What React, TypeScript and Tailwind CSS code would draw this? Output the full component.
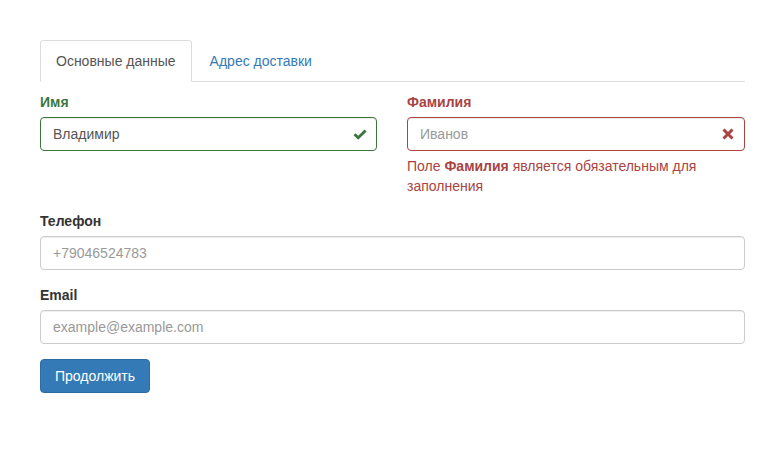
const font = { fontFamily: '"Liberation Sans", Arial, sans-serif' };

function CheckIcon() {
  return (
    <svg width="14" height="14" viewBox="0 0 14 14">
      <path d="M1.5 7.2 L5.2 10.8 L12.6 3.4" fill="none" stroke="#3c763d" strokeWidth="2.8" />
    </svg>
  );
}

function CrossIcon() {
  return (
    <svg width="14" height="14" viewBox="0 0 14 14">
      <path d="M2.5 2.5 L11.5 11.5 M11.5 2.5 L2.5 11.5" fill="none" stroke="#a94442" strokeWidth="3" />
    </svg>
  );
}

const inputBase =
  "block w-full h-[34px] px-3 text-[14px] rounded-[4px] border bg-white outline-none shadow-[inset_0_1px_1px_rgba(0,0,0,0.075)] placeholder:text-[#999]";

export default function App() {
  return (
    <div className="min-h-[461px] bg-white text-[14px] leading-[20px] text-[#333]" style={font}>
      <div className="w-[705px] ml-[40px] pt-[40px]">
        <ul className="flex border-b border-[#ddd]">
          <li className="-mb-px mr-[2px]">
            <span className="block px-[15px] py-[10px] bg-white text-[#555] border border-[#ddd] border-b-transparent rounded-t-[4px]">
              Основные данные
            </span>
          </li>
          <li className="-mb-px mr-[2px]">
            <span className="block px-[15px] py-[10px] text-[#337ab7] border border-transparent">
              Адрес доставки
            </span>
          </li>
        </ul>

        <div className="grid grid-cols-[337px_338px] gap-x-[30px] mt-[10px]">
          <div className="mb-[15px]">
            <label className="block mb-[5px] font-bold text-[#3c763d]">Имя</label>
            <div className="relative">
              <input
                className={`${inputBase} border-[#3c763d] text-[#555] pr-[34px]`}
                defaultValue="Владимир"
              />
              <span className="absolute right-0 top-0 w-[34px] h-[34px] flex items-center justify-center">
                <CheckIcon />
              </span>
            </div>
          </div>

          <div className="mb-[15px]">
            <label className="block mb-[5px] font-bold text-[#a94442]">Фамилия</label>
            <div className="relative">
              <input
                className={`${inputBase} border-[#a94442] text-[#555] pr-[34px]`}
                placeholder="Иванов"
              />
              <span className="absolute right-0 top-0 w-[34px] h-[34px] flex items-center justify-center">
                <CrossIcon />
              </span>
            </div>
            <p className="mt-[5px] text-[#a94442]">
              Поле <b>Фамилия</b> является обязательным для заполнения
            </p>
          </div>
        </div>

        <div className="mb-[15px]">
          <label className="block mb-[5px] font-bold">Телефон</label>
          <input className={`${inputBase} border-[#ccc] text-[#555]`} placeholder="+79046524783" />
        </div>

        <div className="mb-[15px]">
          <label className="block mb-[5px] font-bold">Email</label>
          <input className={`${inputBase} border-[#ccc] text-[#555]`} placeholder="example@example.com" />
        </div>

        <button className="h-[34px] px-[14px] rounded-[4px] bg-[#337ab7] border border-[#2e6da4] text-white text-[14px]">
          Продолжить
        </button>
      </div>
    </div>
  );
}
